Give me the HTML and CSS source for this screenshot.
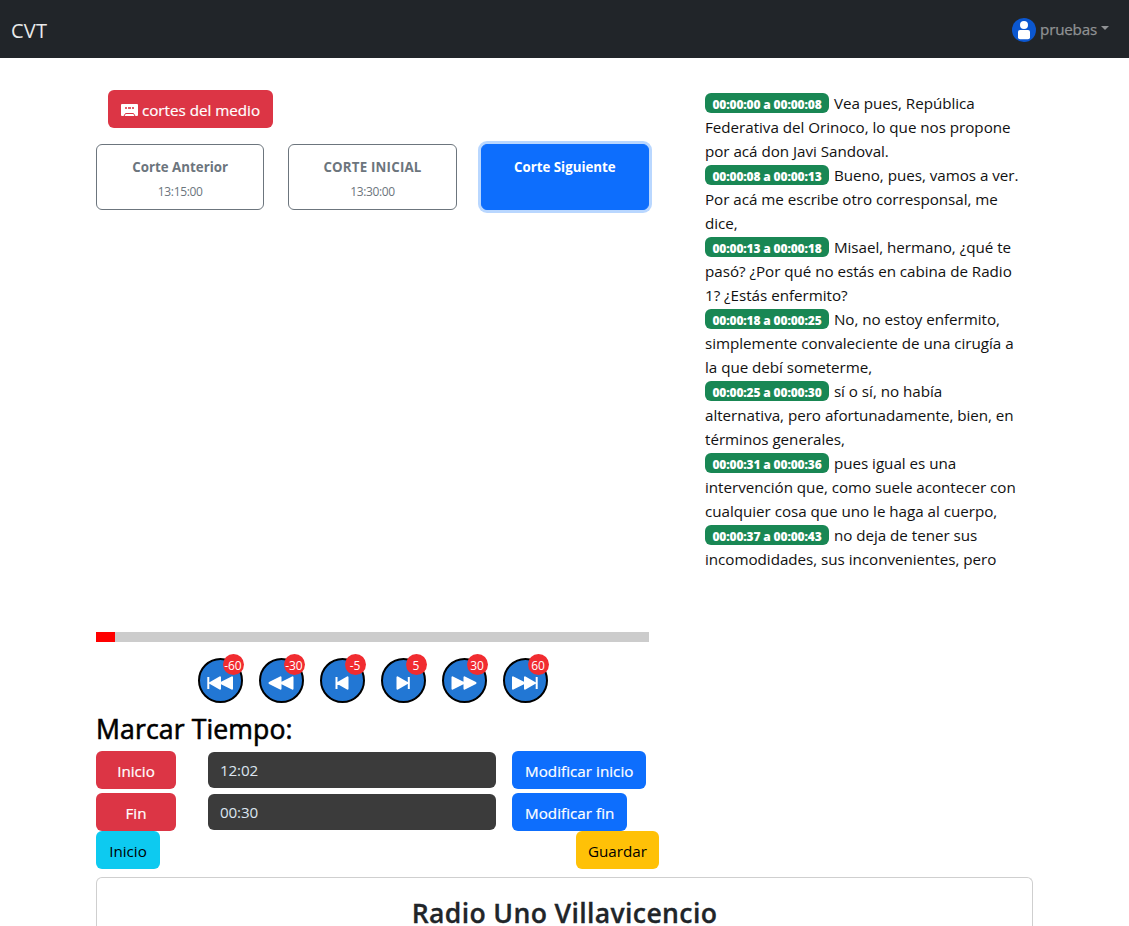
FILE: index.html
```html
<!DOCTYPE html>
<html lang="es">
<head>
<meta charset="utf-8">
<title>CVT</title>
<link rel="stylesheet" href="styles.css">
</head>
<body>
<header class="navbar">
  <a class="brand">CVT</a>
  <div class="user">
    <svg class="avatar" viewBox="0 0 24 24"><circle cx="12" cy="12" r="12" fill="#0b57d0"/><circle cx="12" cy="7" r="4" fill="#fff"/><rect x="6" y="12" width="12" height="9.300" rx="2" fill="#fff"/></svg>
    <span class="user-name">pruebas</span><span class="caret"></span>
  </div>
</header>
<main class="container">
  <div class="columns">
    <section class="player">
      <button class="btn danger medio">
        <svg class="cassette" viewBox="0 0 17 12"><rect width="17" height="12" rx="1" fill="#fff"/><path d="M4 3h2v2H4zM7 3h3v2H7zM11 3h2v2h-2z" fill="#dc3545" opacity=".8"/><path d="M3 12L4.500 9.500h8L14 12" fill="none" stroke="#dc3545"/></svg>
        <span>cortes del medio</span>
      </button>
      <div class="cuts">
        <button class="cut"><b>Corte Anterior</b><small>13:15:00</small></button>
        <button class="cut"><b class="initial">CORTE INICIAL</b><small>13:30:00</small></button>
        <button class="cut active"><b>Corte Siguiente</b></button>
      </div>
      <div class="video"></div>
      <div class="progress"><div class="progress-fill"></div></div>
      <div class="controls">
        <button class="round"><svg viewBox="0 0 26 16"><path d="M1.300 2v12M13 2.300v11.400L3 8zM25 2.300v11.400L14 8z"/></svg><span class="count">-60</span></button>
        <button class="round"><svg viewBox="0 0 26 16"><path d="M12.500 2.300v11.400L1.500 8zM24.500 2.300v11.400L13.500 8z"/></svg><span class="count">-30</span></button>
        <button class="round"><svg viewBox="0 0 26 16"><path d="M7.500 2v12M18.500 2.300v11.400L8.500 8z"/></svg><span class="count">-5</span></button>
        <button class="round"><svg viewBox="0 0 26 16"><path d="M7.500 2.300v11.400L17.500 8zM18.800 2v12"/></svg><span class="count">5</span></button>
        <button class="round"><svg viewBox="0 0 26 16"><path d="M1.500 2.300v11.400L12.500 8zM13.500 2.300v11.400L24.500 8z"/></svg><span class="count">30</span></button>
        <button class="round"><svg viewBox="0 0 26 16"><path d="M1 2.300v11.400L12 8zM13 2.300v11.400L23 8zM24.700 2v12"/></svg><span class="count">60</span></button>
      </div>
      <h2 class="heading">Marcar Tiempo:</h2>
      <div class="marks">
        <button class="btn danger">Inicio</button><input class="time" value="12:02"><button class="btn primary">Modificar inicio</button>
        <button class="btn danger">Fin</button><input class="time" value="00:30"><button class="btn primary">Modificar fin</button>
      </div>
      <div class="actions"><button class="btn info">Inicio</button><button class="btn warning">Guardar</button></div>
    </section>
    <section class="transcript">
      <p><span class="badge">00:00:00 a 00:00:08</span> Vea pues, República<br>Federativa del Orinoco, lo que nos propone<br>por acá don Javi Sandoval.</p>
      <p><span class="badge">00:00:08 a 00:00:13</span> Bueno, pues, vamos a ver.<br>Por acá me escribe otro corresponsal, me<br>dice,</p>
      <p><span class="badge">00:00:13 a 00:00:18</span> Misael, hermano, ¿qué te<br>pasó? ¿Por qué no estás en cabina de Radio<br>1? ¿Estás enfermito?</p>
      <p><span class="badge">00:00:18 a 00:00:25</span> No, no estoy enfermito,<br>simplemente convaleciente de una cirugía a<br>la que debí someterme,</p>
      <p><span class="badge">00:00:25 a 00:00:30</span> sí o sí, no había<br>alternativa, pero afortunadamente, bien, en<br>términos generales,</p>
      <p><span class="badge">00:00:31 a 00:00:36</span> pues igual es una<br>intervención que, como suele acontecer con<br>cualquier cosa que uno le haga al cuerpo,</p>
      <p><span class="badge">00:00:37 a 00:00:43</span> no deja de tener sus<br>incomodidades, sus inconvenientes, pero</p>
    </section>
  </div>
  <section class="card"><h1 class="station">Radio Uno Villavicencio</h1></section>
</main>
</body>
</html>
```
FILE: styles.css
```css
* { box-sizing: border-box; }
body { margin: 0; height: 926px; overflow: hidden; background: #fff; color: #111; font: 15.2px/24px "Open Sans", "Noto Sans", sans-serif; }
button, input { font: inherit; margin: 0; }
.navbar { height: 58px; padding: 0 20px 0 11px; background: #212529; display: flex; justify-content: space-between; align-items: center; }
.brand { color: #e9eaea; font-size: 20px; padding-top: 4px; letter-spacing: .2px; }
.user { display: flex; align-items: center; color: #909294; padding-top: 2px; }
.avatar { width: 24px; height: 24px; margin-right: 4px; }
.user-name { letter-spacing: -.2px; -webkit-text-stroke: .25px; margin-top: -2px; }
.caret { border: 4px solid transparent; border-top-color: #909294; border-bottom: 0; margin: -4px 0 0 4px; }
.container { width: 937px; margin-left: 96px; padding-top: 32px; }
.columns { display: flex; gap: 56px; height: 787px; }
.player { width: 553px; display: flex; flex-direction: column; }
.btn { height: 38px; padding: 2px 0 0; border: 0; border-radius: 6px; color: #fff; white-space: nowrap; }
.danger, .primary { -webkit-text-stroke: .2px; }
.danger { background: #dc3545; }
.primary { background: #0d6efd; }
.info { background: #0dcaf0; color: #000; width: 64px; }
.warning { background: #ffc107; color: #000; width: 83px; }
.medio { width: 165px; margin: 0 0 16px 12px; flex: none; display: flex; align-items: center; justify-content: center; gap: 4px; }
.cassette { width: 17px; height: 12px; }
.cuts { display: grid; grid-template-columns: repeat(3, 1fr); gap: 24px; height: 66px; flex: none; }
.cut { border: 1px solid #6c757d; border-radius: 6px; background: #fff; color: #6c757d; padding: 10px 0 0; display: flex; flex-direction: column; align-items: center; font-size: 13.3px; }
.cut b { line-height: 24px; }
.initial { letter-spacing: .2px; }
.cut small { font-size: 12px; line-height: 24px; letter-spacing: -.35px; margin-top: 1px; }
.active { background: #0d6efd; border-color: #0d6efd; color: #fff; box-shadow: 0 0 0 3px #b9d7ff; }
.video { height: 422px; flex: none; }
.progress { height: 10px; flex: none; background: #ccc; }
.progress-fill { width: 19px; height: 10px; background: red; }
.controls { display: flex; gap: 16px; margin: 16px 0 0 101.5px; height: 45px; flex: none; }
.round { position: relative; width: 45px; height: 45px; padding: 4px 0 0; border: 2px solid #000; border-radius: 50%; background: #2277d4; display: flex; align-items: center; justify-content: center; }
.round svg { width: 26px; height: 16px; flex: none; fill: #fff; stroke: #fff; stroke-width: 2; stroke-linejoin: round; }
.count { position: absolute; top: -6px; right: -3px; width: 21px; height: 21px; border-radius: 50%; background: #f12c30; color: #fff; font-size: 12px; line-height: 23px; text-align: center; white-space: nowrap; display: flex; justify-content: center; letter-spacing: -.1px; }
.heading { margin: 9px 0 5px; font-size: 26.6px; line-height: 34px; font-weight: 500; color: #000; -webkit-text-stroke: .6px; letter-spacing: .12px; }
.marks { display: grid; grid-template-columns: 80px 288px auto; column-gap: 32px; row-gap: 4px; align-items: center; justify-content: start; }
.marks .primary { margin-left: -16px; padding: 2px 13px 0; justify-self: start; letter-spacing: .03px; }
.time { width: 288px; height: 36px; border: 0; border-radius: 6px; background: #3b3b3b; color: #dce5ef; padding: 0 12px; letter-spacing: -.15px; }
.actions { display: flex; justify-content: space-between; width: 563px; }
.transcript { width: 328px; height: 480px; margin-top: 1px; overflow: hidden; white-space: nowrap; letter-spacing: -.03px; }
.transcript p { margin: 0; }
.badge { display: inline-block; height: 20px; width: 124px; margin-right: 1px; border-radius: 6px; background: #198754; color: #fff; font-size: 12px; line-height: 23px; font-weight: 800; text-align: center; vertical-align: middle; position: relative; top: -2px; letter-spacing: -.15px; }
.card { height: 49px; border: 1px solid #cfcfcf; border-bottom: 0; border-radius: 6px 6px 0 0; padding-top: 20px; }
.station { margin: 0; color: #212529; text-align: center; font-size: 26.6px; line-height: 30px; font-weight: 600; letter-spacing: .35px; -webkit-text-stroke: .3px; }
```
